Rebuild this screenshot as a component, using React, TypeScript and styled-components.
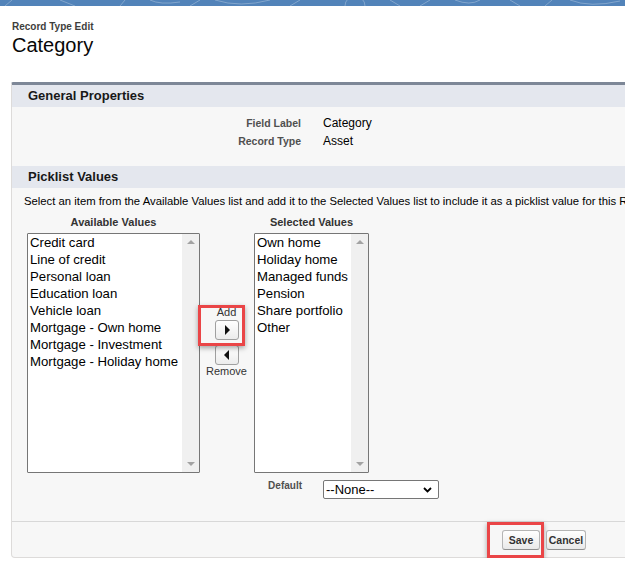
import React from "react";
import styled, { createGlobalStyle } from "styled-components";

const GlobalStyle = createGlobalStyle`
  html, body {
    margin: 0;
    padding: 0;
    background: #ffffff;
    overflow: hidden;
  }
  body {
    font-family: "Liberation Sans", Arial, sans-serif;
    color: #000;
  }
  * { box-sizing: border-box; }
`;

const TopBar = styled.div`
  height: 6px;
  background: #5283b9;
  overflow: hidden;
  display: block;
  svg { display: block; }
`;

const PageHeader = styled.header`
  padding: 15px 0 0 12px;
`;

const SubTitle = styled.div`
  font-size: 10px;
  font-weight: bold;
  line-height: 12px;
  color: #3e3e3c;
`;

const Title = styled.h1`
  margin: 0;
  font-size: 20px;
  font-weight: normal;
  line-height: 24px;
  color: #080707;
`;

const Panel = styled.section`
  margin: 25px 0 0 11px;
  width: 720px;
  background: #f7f7f7;
  border: 1px solid #dddbda;
  border-top: 3px solid #7d8797;
  border-radius: 2px 2px 4px 4px;
`;

const SectionHeader = styled.h2`
  margin: 0;
  height: 22px;
  line-height: 22px;
  padding-left: 16px;
  background: #e4e7ee;
  font-size: 13px;
  font-weight: bold;
  color: #181818;
`;

const GeneralBody = styled.div`
  padding: 7px 0 16px;
`;

const FieldRow = styled.div`
  display: grid;
  grid-template-columns: 289px auto;
  column-gap: 22px;
  align-items: center;
  height: 18px;
`;

const FieldLabel = styled.div`
  text-align: right;
  font-size: 10.5px;
  font-weight: bold;
  color: #505050;
`;

const FieldValue = styled.div`
  font-size: 12px;
  color: #000;
`;

const PicklistBody = styled.div`
  padding: 6px 0 22px;
`;

const Description = styled.p`
  margin: 0;
  padding-left: 12px;
  font-size: 11.3px;
  line-height: 14px;
  white-space: nowrap;
  color: #000;
`;

const DualList = styled.div`
  margin: 7px 0 0 15px;
  display: grid;
  grid-template-columns: 173px 54px 115px;
  row-gap: 4px;
`;

const ColumnHeader = styled.div`
  font-size: 11px;
  font-weight: bold;
  line-height: 14px;
  text-align: center;
  color: #333;
`;

const ListBox = styled.div`
  height: 240px;
  border: 1px solid #767676;
  border-radius: 1px;
  background: #fff;
  display: flex;
`;

const ListItems = styled.ul`
  flex: 1;
  margin: 0;
  padding: 0 0 0 2px;
  list-style: none;
`;

const ListItem = styled.li`
  font-size: 13.2px;
  line-height: 17px;
  white-space: nowrap;
  color: #000;
`;

const ScrollTrack = styled.div`
  width: 17px;
  background: #f0f0f0;
  display: flex;
  flex-direction: column;
  justify-content: space-between;
  align-items: center;
  padding: 6px 0 6px;
`;

const ScrollArrow = styled.span<{ $dir: "up" | "down" }>`
  width: 0;
  height: 0;
  border-left: 4px solid transparent;
  border-right: 4px solid transparent;
  ${(p) =>
    p.$dir === "up"
      ? "border-bottom: 4px solid #a3a3a3;"
      : "border-top: 4px solid #a3a3a3;"}
`;

const MoveColumn = styled.div`
  display: flex;
  flex-direction: column;
  align-items: center;
  padding-top: 73px;
  padding-right: 1px;
`;

const AddGroup = styled.div`
  position: relative;
  display: flex;
  flex-direction: column;
  align-items: center;
  width: 24px;
`;

const MoveLabel = styled.div`
  font-size: 11px;
  line-height: 13px;
  color: #333;
  white-space: nowrap;
`;

const ArrowButton = styled.button<{ $mt?: number }>`
  width: 24px;
  height: 20px;
  margin-top: ${(p) => p.$mt ?? 0}px;
  padding: 0;
  border: 1px solid #a0a0a0;
  border-radius: 3px;
  background: linear-gradient(#ffffff, #ececec);
  display: flex;
  align-items: center;
  justify-content: center;
`;

const Triangle = styled.span<{ $dir: "left" | "right" }>`
  width: 0;
  height: 0;
  border-top: 5px solid transparent;
  border-bottom: 5px solid transparent;
  ${(p) =>
    p.$dir === "right"
      ? "border-left: 5px solid #111; margin-left: 1px;"
      : "border-right: 5px solid #111; margin-right: 1px;"}
`;

const Highlight = styled.div<{ $t: number; $r: number; $b: number; $l: number }>`
  position: absolute;
  top: ${(p) => p.$t}px;
  right: ${(p) => p.$r}px;
  bottom: ${(p) => p.$b}px;
  left: ${(p) => p.$l}px;
  border: 3px solid #ea4547;
  box-shadow: 0 2px 5px rgba(0, 0, 0, 0.35);
  pointer-events: none;
`;

const DefaultRow = styled.div`
  display: grid;
  grid-template-columns: 290px auto;
  column-gap: 21px;
  margin-top: 7px;
`;

const DefaultLabel = styled.div`
  text-align: right;
  font-size: 10px;
  font-weight: bold;
  color: #505050;
`;

const SelectBox = styled.div`
  width: 116px;
  height: 19px;
  border: 1px solid #767676;
  border-radius: 2px;
  background: #fff;
  display: flex;
  align-items: center;
  justify-content: space-between;
  padding: 0 6px 0 2px;
  font-size: 13px;
  color: #000;
`;

const Footer = styled.div`
  border-top: 1px solid #d8d8d8;
  height: 36px;
  padding: 8px 0 0 490px;
  display: flex;
  gap: 6px;
  align-items: flex-start;
`;

const ButtonWrap = styled.div`
  position: relative;
  display: flex;
`;

const PageButton = styled.button<{ $w: number }>`
  width: ${(p) => p.$w}px;
  height: 20px;
  padding: 0;
  border: 1px solid #b5b5b5;
  border-bottom-color: #8f8f8f;
  border-radius: 3px;
  background: linear-gradient(#ffffff, #e9e9e9);
  font-family: "Liberation Sans", Arial, sans-serif;
  font-size: 10.5px;
  font-weight: bold;
  color: #333;
`;

const available = [
  "Credit card",
  "Line of credit",
  "Personal loan",
  "Education loan",
  "Vehicle loan",
  "Mortgage - Own home",
  "Mortgage - Investment",
  "Mortgage - Holiday home",
];

const selected = [
  "Own home",
  "Holiday home",
  "Managed funds",
  "Pension",
  "Share portfolio",
  "Other",
];

function Banner() {
  return (
    <TopBar>
      <svg width="625" height="6" viewBox="0 0 625 6">
        <g fill="none" stroke="rgba(255,255,255,0.28)" strokeWidth="1">
          <path d="M5 6 L12 0 M60 0 L75 6 M120 6 L125 0 M150 0 Q160 5 180 2 M190 6 L200 0" />
          <path d="M215 0 Q240 8 270 0 M290 6 L300 0 M345 6 A8 8 0 0 1 365 6 M390 0 L400 6" />
          <path d="M420 6 L430 0 M455 0 Q470 6 480 0 M510 0 L520 6 M545 6 L552 0 M570 0 Q590 8 620 1" />
        </g>
      </svg>
    </TopBar>
  );
}

function PickList({ items }: { items: string[] }) {
  return (
    <ListBox>
      <ListItems>
        {items.map((it) => (
          <ListItem key={it}>{it}</ListItem>
        ))}
      </ListItems>
      <ScrollTrack>
        <ScrollArrow $dir="up" />
        <ScrollArrow $dir="down" />
      </ScrollTrack>
    </ListBox>
  );
}

export default function App() {
  return (
    <>
      <GlobalStyle />
      <Banner />
      <PageHeader>
        <SubTitle>Record Type Edit</SubTitle>
        <Title>Category</Title>
      </PageHeader>
      <Panel>
        <SectionHeader>General Properties</SectionHeader>
        <GeneralBody>
          <FieldRow>
            <FieldLabel>Field Label</FieldLabel>
            <FieldValue>Category</FieldValue>
          </FieldRow>
          <FieldRow>
            <FieldLabel>Record Type</FieldLabel>
            <FieldValue>Asset</FieldValue>
          </FieldRow>
        </GeneralBody>
        <SectionHeader>Picklist Values</SectionHeader>
        <PicklistBody>
          <Description>
            Select an item from the Available Values list and add it to the Selected Values list to
            include it as a picklist value for this Record Type.
          </Description>
          <DualList>
            <ColumnHeader>Available Values</ColumnHeader>
            <div />
            <ColumnHeader>Selected Values</ColumnHeader>
            <PickList items={available} />
            <MoveColumn>
              <AddGroup>
                <MoveLabel>Add</MoveLabel>
                <ArrowButton $mt={1} aria-label="Add">
                  <Triangle $dir="right" />
                </ArrowButton>
                <Highlight $t={-1} $r={-6} $b={-6} $l={-17} />
              </AddGroup>
              <ArrowButton $mt={5} aria-label="Remove">
                <Triangle $dir="left" />
              </ArrowButton>
              <MoveLabel>Remove</MoveLabel>
            </MoveColumn>
            <PickList items={selected} />
          </DualList>
          <DefaultRow>
            <DefaultLabel>Default</DefaultLabel>
            <SelectBox>
              <span>--None--</span>
              <svg width="9" height="6" viewBox="0 0 9 6">
                <path d="M1 1 L4.5 4.5 L8 1" fill="none" stroke="#000" strokeWidth="1.8" />
              </svg>
            </SelectBox>
          </DefaultRow>
        </PicklistBody>
        <Footer>
          <ButtonWrap>
            <PageButton $w={38}>Save</PageButton>
            <Highlight $t={-8} $r={-4} $b={-8} $l={-15} />
          </ButtonWrap>
          <ButtonWrap>
            <PageButton $w={40}>Cancel</PageButton>
          </ButtonWrap>
        </Footer>
      </Panel>
    </>
  );
}
